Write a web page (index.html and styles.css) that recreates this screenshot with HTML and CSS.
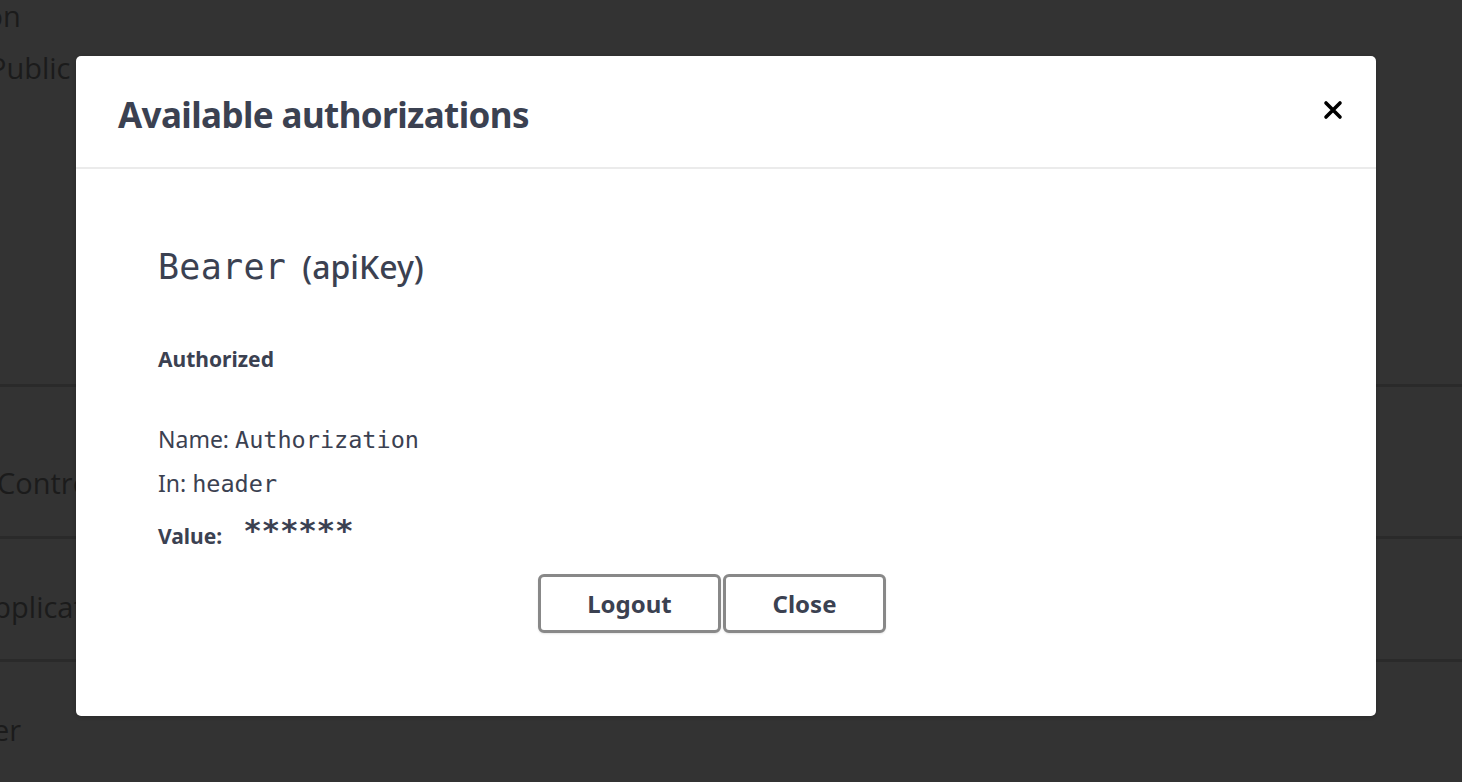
FILE: index.html
```html
<!DOCTYPE html>
<html>
<head>
<meta charset="utf-8">
<link rel="stylesheet" href="styles.css">
</head>
<body>
<div class="page">
  <div class="row row-top">
    <div class="bg-text t1">Description</div>
    <div class="bg-text t2">Public</div>
  </div>
  <div class="row row-a"><div class="bg-text">Controller</div></div>
  <div class="row row-b"><div class="bg-text">Application</div></div>
  <div class="row row-c"><div class="bg-text">User</div></div>
</div>
<div class="backdrop">
  <div class="modal">
    <div class="modal-header">
      <h3 class="modal-title">Available authorizations</h3>
      <button class="close-x" aria-label="Close">
        <svg width="20" height="20" viewBox="0 0 20 20"><path d="M3 3 L17 17 M17 3 L3 17" stroke="#000" stroke-width="3.6" stroke-linecap="round"/></svg>
      </button>
    </div>
    <div class="modal-body">
      <h4 class="scheme"><code class="scheme-name">Bearer</code><span class="scheme-type">(apiKey)</span></h4>
      <h6 class="authorized">Authorized</h6>
      <div class="info">
        <p class="line">Name: <code>Authorization</code></p>
        <p class="line">In: <code>header</code></p>
        <p class="line value-line"><span class="label">Value:</span><code class="stars">******</code></p>
      </div>
      <div class="btns">
        <button class="btn">Logout</button>
        <button class="btn">Close</button>
      </div>
    </div>
  </div>
</div>
</body>
</html>
```
FILE: styles.css
```css
html, body {
  margin: 0;
  padding: 0;
  height: 100%;
}
body {
  background: #333333;
  font-family: "Open Sans", sans-serif;
  overflow: hidden;
}
.page {
  height: 782px;
  display: flex;
  flex-direction: column;
}
.row {
  border-bottom: 3px solid #2a2a2a;
  display: flex;
  flex-direction: column;
  justify-content: flex-start;
  box-sizing: border-box;
}
.row-top { height: 387px; }
.row-a { height: 152px; padding-top: 70px; }
.row-b { height: 123px; padding-top: 42px; }
.row-c { height: 120px; padding-top: 42px; border-bottom: none; }
.bg-text {
  color: #1b1b1b;
  font-size: 29px;
  line-height: 52px;
  white-space: nowrap;
}
.t1 { margin-top: -10px; margin-left: -134px; }
.t2 { margin-left: -11px; }
.row-a .bg-text { margin-left: -3px; }
.row-b .bg-text { margin-left: -25px; }
.row-c .bg-text { margin-left: -42px; }

.backdrop {
  position: absolute;
  inset: 0;
  display: flex;
  justify-content: flex-start;
  align-items: flex-start;
  padding: 56px 0 0 76px;
}
.modal {
  width: 1300px;
  height: 660px;
  background: #fff;
  border-radius: 5px;
  box-sizing: border-box;
  box-shadow: 0 1px 4px rgba(0,0,0,0.2);
}
.modal-header {
  height: 113px;
  border-bottom: 2px solid #ebebeb;
  display: flex;
  align-items: center;
  justify-content: space-between;
  padding: 0 33px 0 42px;
  box-sizing: border-box;
}
.modal-title {
  margin: 0;
  font-family: "Noto Sans", sans-serif;
  font-weight: 700;
  font-size: 35px;
  color: #3b4151;
  letter-spacing: -0.6px;
  padding-top: 6px;
}
.close-x {
  background: none;
  border: none;
  padding: 0;
  width: 20px;
  height: 20px;
  margin-top: -4px;
  cursor: pointer;
}
.close-x svg { display: block; }
.modal-body {
  padding: 74px 110px 0 82px;
  color: #3b4151;
}
.scheme {
  margin: 0;
  display: flex;
  align-items: baseline;
  gap: 16px;
  height: 48px;
  line-height: 48px;
}
.scheme-name {
  font-family: "DejaVu Sans Mono", monospace;
  font-weight: 400;
  font-size: 35px;
  letter-spacing: 0.3px;
}
.scheme-type {
  font-family: "Noto Sans", sans-serif;
  font-weight: 500;
  font-size: 32px;
}
.authorized {
  margin: 55px 0 0 0;
  font-family: "Noto Sans", sans-serif;
  font-weight: 700;
  font-size: 21px;
  line-height: 26px;
}
.info {
  margin-top: 45px;
}
.line {
  margin: 0;
  font-family: "Noto Sans", sans-serif;
  font-size: 23px;
  line-height: 44px;
  height: 44px;
}
.line code {
  font-family: "DejaVu Sans Mono", monospace;
  font-size: 23.5px;
}
.value-line {
  display: flex;
  align-items: baseline;
  gap: 21px;
  height: 44px;
  line-height: 56px;
}
.label {
  font-weight: 700;
  font-size: 21px;
}
.value-line code.stars {
  font-size: 31px;
  font-weight: 700;
  letter-spacing: -0.3px;
  position: relative;
  top: -3px;
}
.btns {
  display: flex;
  justify-content: center;
  gap: 2px;
  margin-top: 25px;
}
.btn {
  height: 59px;
  border: 3px solid #888;
  border-radius: 6px;
  background: #fff;
  font-family: "Noto Sans", sans-serif;
  font-weight: 700;
  font-size: 24px;
  color: #3b4151;
  box-shadow: 0 1px 2px rgba(0,0,0,0.1);
  cursor: pointer;
}
.btn:first-child { width: 183px; }
.btn:last-child { width: 163px; }
```
